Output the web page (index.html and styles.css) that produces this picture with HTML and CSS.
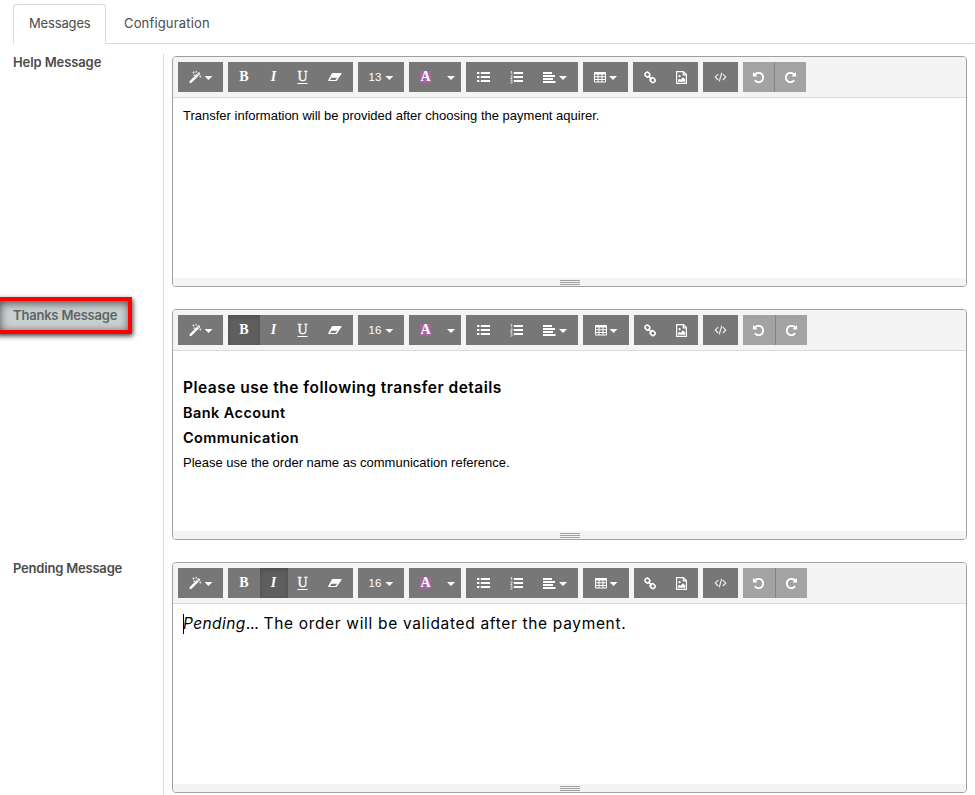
FILE: index.html
```html
<!DOCTYPE html>
<html lang="en">
<head>
<meta charset="utf-8">
<title>Messages</title>
<link rel="stylesheet" href="styles.css">
</head>
<body>
<nav class="tabs">
  <a class="tab tab-active"><span class="t-messages">Messages</span></a>
  <a class="tab"><span class="t-config">Configuration</span></a>
</nav>
<main class="form">
  <section class="row">
    <div class="label"><span class="l-help">Help Message</span></div>
    <div class="field"><div class="editor">
      <div class="toolbar" data-size="13"></div>
      <div class="content first"><p class="plain">Transfer information will be provided after choosing the payment aquirer.</p></div>
      <div class="status"><i></i><i></i><i></i></div>
    </div></div>
  </section>
  <section class="row">
    <div class="label"><span class="l-thanks">Thanks Message</span><div class="highlight"></div></div>
    <div class="field"><div class="editor">
      <div class="toolbar" data-size="16" data-active="bold"></div>
      <div class="content thanks">
        <h3>Please use the following transfer details</h3>
        <h4 class="bank">Bank Account</h4>
        <h4 class="comm">Communication</h4>
        <p class="plain">Please use the order name as communication reference.</p>
      </div>
      <div class="status"><i></i><i></i><i></i></div>
    </div></div>
  </section>
  <section class="row">
    <div class="label"><span class="l-pending">Pending Message</span></div>
    <div class="field"><div class="editor">
      <div class="toolbar" data-size="16" data-active="italic"></div>
      <div class="content"><p class="pending"><span class="caret-line"></span><em>Pending</em><span class="dots">...</span> The order will be validated after the payment.</p></div>
      <div class="status"><i></i><i></i><i></i></div>
    </div></div>
  </section>
</main>
<script src="script.js"></script>
</body>
</html>
```
FILE: styles.css
```css
* { box-sizing: border-box; }
body { margin: 0; height: 795px; overflow: hidden; background: #fff; color: #4c4c4c; font-family: Inter, "Liberation Sans", sans-serif; font-size: 13px; }
p, h3, h4 { margin: 0; }
.tabs { display: flex; height: 44px; margin-left: 13px; padding-top: 4px; border-bottom: 1px solid #d9d9d9; }
.tab { height: 40px; padding: 0 16px; line-height: 37px; border: 1px solid transparent; border-radius: 4px 4px 0 0; white-space: nowrap; }
.tab-active { width: 93px; padding-left: 15px; border-color: #d9d9d9; border-bottom-color: #fff; background: #fff; }
.tab + .tab { padding-left: 17px; }
.t-messages { letter-spacing: -.15px; }
.t-config { letter-spacing: .16px; }
.form { padding-top: 10px; }
.row { display: flex; height: 253px; }
.label { position: relative; width: 164px; padding-left: 13px; line-height: 16px; font-weight: 600; border-right: 1px solid #d9d9d9; white-space: nowrap; }
.l-help { letter-spacing: -.1px; }
.l-thanks, .l-pending { letter-spacing: -.2px; }
.field { flex: 1; padding: 2px 8px 0; }
.editor { display: flex; flex-direction: column; height: 231px; border: 1px solid #a0a0a0; border-radius: 4px; overflow: hidden; }
.toolbar { display: flex; gap: 5px; height: 41px; padding: 5px; background: #f4f4f4; border-bottom: 1px solid #d9d9d9; }
.group { display: flex; height: 30px; background: #777; color: #fff; }
.btn { display: flex; align-items: center; justify-content: center; height: 30px; }
.btn svg { display: block; fill: currentColor; }
.btn.active { background: #5e5e5e; box-shadow: inset 0 2px 4px rgba(0,0,0,.18); }
.drop { width: 8px; height: 4px; margin: 2px 0 0 3px; background: #fff; clip-path: polygon(0 0, 100% 0, 50% 100%); }
.number + .drop { margin-left: 4px; }
.btn > .drop:only-child { margin: 2px 0 0 -1px; }
.letter { font: bold 14px/16px "Liberation Serif", serif; }
.slant { font-style: italic; margin-left: -1px; }
.under { font-weight: normal; text-decoration: underline; text-underline-offset: 2px; -webkit-text-stroke: .3px #fff; margin-left: -1px; }
.colour { width: 11px; height: 12px; line-height: 12px; text-align: center; background: #a5669e; }
.number { font: 11.5px/14px "Liberation Sans", Arial, sans-serif; }
.dim { background: #a3a3a3; }
.dim + .dim { border-left: 1px solid #858585; }
.dim svg { margin-right: 1px; }
.content { flex: 1; padding: 10px; color: #000; white-space: nowrap; }
.content.first { padding-top: 9px; }
.plain { font: 13px/17px "Liberation Sans", Arial, sans-serif; }
.content.thanks { padding-top: 24px; }
.thanks h3 { font-size: 15.5px; line-height: 25px; font-weight: 600; letter-spacing: .49px; }
.thanks h4 { font-size: 14.5px; line-height: 25px; font-weight: 600; letter-spacing: .42px; }
.thanks .plain { line-height: 25px; }
.pending { position: relative; font-size: 15.5px; line-height: 20px; letter-spacing: .67px; }
.pending em { letter-spacing: .4px; }
.dots { letter-spacing: -.2px; }
.caret-line { position: absolute; left: 0; top: 0; width: 1px; height: 20px; background: #000; }
.status { display: flex; flex-direction: column; align-items: center; gap: 1px; height: 8px; padding-top: 2px; background: #f4f4f4; }
.status i { width: 20px; height: 1px; background: #a0a0a0; }
.highlight { position: absolute; left: -5px; top: -10px; width: 137px; height: 37px; border: 4px solid #f00; background: rgba(120,137,137,.4); box-shadow: 1px 2px 5px rgba(0,0,0,.75), inset 1px 2px 8px rgba(0,0,0,.65); }
```
FILE: script.js
```javascript
const svg = (body, w = 13, h = 13, box = `0 0 ${w} ${h}`) =>
  `<svg width="${w}" height="${h}" viewBox="${box}" aria-hidden="true">${body}</svg>`;
const repeatPath = '<path d="M1664 256v448q0 26-19 45t-45 19h-448q-42 0-59-40-17-39 14-69l138-138q-148-137-349-137-104 0-198.5 40.5t-163.5 109.5-109.5 163.5-40.5 198.5 40.5 198.5 109.5 163.5 163.5 109.5 198.5 40.5q119 0 225-52t179-147q7-10 23-12 15 0 25 9l137 138q9 8 9.5 20.5t-7.5 22.5q-109 132-264 204.5t-327 72.5q-156 0-298-61t-245-164-164-245-61-298 61-298 164-245 245-164 298-61q147 0 284.5 55.5t244.5 156.500l130-129q29-31 70-14 39 17 39 59z"/>';
const icons = {
  wand: svg('<path d="M1.700 10.800 9.900 2.600" fill="none" stroke="#fff" stroke-width="2.500" stroke-linecap="round"/><path d="M8.500 4 9.900 2.600" stroke="#777" stroke-width=".8"/><path d="M3.500 1.500l.7.3.3.8.3-.8.8-.3-.8-.3L4.500.4l-.3.8zM6.500 .9l.6.200.2.6.3-.6.6-.2-.6-.3-.3-.6-.2.6zM10.400 5.500l.6.3.3.7.3-.7.7-.3-.7-.3-.3-.7-.3.700zM4.600 4.200l.6.300.2.6.3-.6.6-.3-.6-.2-.3-.6-.2.6z" stroke="#fff" stroke-width=".35"/>'),
  eraser: svg('<path d="M4.700 2h8.300q1 0 .5.900L8.900 9.400q-.4.600-1 .600H.8q-1 0-.5-.9L3.800 2.600Q4.100 2 4.700 2zM3.500 6.700 1.900 9h5.500l1.800-2.300z" fill-rule="evenodd"/>', 14, 12),
  ul: svg('<path d="M0 1h2.400v2H0zM0 5h2.400v2H0zM0 9h2.400v2H0zM3.800 1H13v2H3.800zM3.800 5H13v2H3.800zM3.800 9H13v2H3.800z"/>'),
  ol: svg('<path d="M.5 1.100 1.700.4V3.500M.4 5h1.800v1L.5 7.500h1.900M.4 9h1.800L1.300 10.200l1 .7-.6 1.200H.3" fill="none" stroke="#fff" stroke-width=".7"/><path d="M3.800 1H13v2H3.800zM3.800 5H13v2H3.800zM3.800 9H13v2H3.800z"/>'),
  align: svg('<path d="M0 1h9v1.900H0zM0 4h12v1.900H0zM0 7h10v1.900H0zM0 10h12.500v1.900H0z"/>'),
  table: svg('<path d="M1 1h10q1 0 1 1v8.500q0 1-1 1H1q-1 0-1-1V2q0-1 1-1zM1 3.500v1.700h2.500V3.500zm3.500 0v1.700h3V3.500zm4 0v1.700H11V3.500zM1 6.200v1.700h2.500V6.200zm3.500 0v1.700h3V6.200zm4 0v1.700H11V6.200zM1 8.900v1.600h2.500V8.900zm3.500 0v1.600h3V8.900zm4 0v1.600H11V8.900z" fill-rule="evenodd"/>', 12, 13),
  link: svg('<g fill="none" stroke="#fff" stroke-width="1.600"><rect x="1.100" y="1.500" width="4.600" height="4.200" rx="1.800" transform="rotate(45 3.400 3.600)"/><rect x="6.300" y="7" width="4.800" height="4.200" rx="1.800" transform="rotate(45 8.700 9.100)"/><path d="m4.300 5 3.600 3.300"/></g>', 12, 13),
  image: svg('<path d="M.6.600h6.800l3 3v8.800H.6zM7.300.8v3h3" fill="none" stroke="#fff" stroke-width="1.200"/><circle cx="3.600" cy="5.200" r="1.100"/><path d="M2 10.700V9.100l1.400-1.300 1 1L7 6.300l2.200 2.200v2.200z"/>', 11, 13),
  code: svg('<path d="M681 1399l-50 50q-10 10-23 10t-23-10l-466-466q-10-10-10-23t10-23l466-466q10-10 23-10t23 10l50 50q10 10 10 23t-10 23l-393 393 393 393q10 10 10 23t-10 23zm591-1067l-373 1291q-4 13-15.500 19.500t-23.500 2.500l-62-17q-13-4-19.500-15.500t-2.500-24.500l373-1291q4-13 15.500-19.500t23.500-2.500l62 17q13 4 19.500 15.500t2.500 24.500zm657 651l-466 466q-10 10-23 10t-23-10l-50-50q-10-10-10-23t10-23l393-393-393-393q-10-10-10-23t10-23l50-50q10-10 23-10t23 10l466 466q10 10 10 23t-10 23z" stroke="#fff" stroke-width="40"/>', 13, 12, '0 0 2048 1900'),
  undo: svg(`<g transform="translate(1792 0) scale(-1 1)">${repeatPath}</g>`, 13, 13, '0 0 1792 1792'),
  redo: svg(repeatPath, 13, 13, '0 0 1792 1792')
};
const drop = '<span class="drop"></span>';
const btn = (width, body, cls = '') => `<span class="btn ${cls}" style="width:${width}px">${body}</span>`;
const group = (...items) => `<div class="group">${items.join('')}</div>`;

document.querySelectorAll('.toolbar').forEach(bar => {
  const on = bar.dataset.active;
  const wide = bar.dataset.size === '16' ? 1 : 0;
  bar.innerHTML = [
    group(btn(45, icons.wand + drop)),
    group(
      btn(32, '<span class="letter">B</span>', on === 'bold' ? 'active' : ''),
      btn(28, '<span class="letter slant">I</span>', on === 'italic' ? 'active' : ''),
      btn(30, '<span class="letter under">U</span>'),
      btn(34, icons.eraser), btn(1, '')),
    group(btn(46, `<span class="number">${bar.dataset.size}</span>${drop}`)),
    group(btn(33, '<span class="letter colour">A</span>'), btn(19, drop)),
    group(btn(34, icons.ul), btn(33, icons.ol), btn(44, icons.align + drop), btn(1, '')),
    group(btn(45 + wide, icons.table + drop)),
    group(btn(33 - wide, icons.link), btn(31, icons.image), btn(1, '')),
    group(btn(35, icons.code)),
    group(btn(31 + wide, icons.undo, 'dim'), btn(32, icons.redo, 'dim'))
  ].join('');
});
```
